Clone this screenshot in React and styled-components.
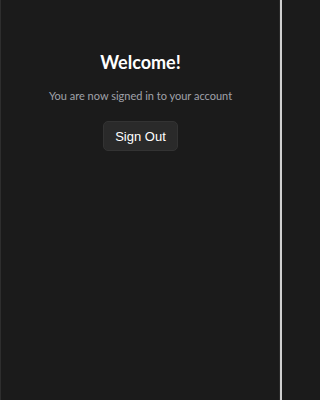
import React from 'react';
import styled, { createGlobalStyle } from 'styled-components';

const GlobalStyle = createGlobalStyle`
	html, body {
		margin: 0;
		padding: 0;
		background: #1b1b1b;
	}
`;

const Page = styled.div`
	width: 282px;
	height: 400px;
	box-sizing: border-box;
	background: #1b1b1b;
	border-left: 1px solid #2e2e2e;
	border-right: 2px solid #cfcfcf;
	box-shadow: inset -1px 0 0 #2a2a2a;
	display: flex;
	flex-flow: column nowrap;
	align-items: center;
	padding-top: 50px;
`;

const Heading = styled.h1`
	margin: 0;
	color: #ffffff;
	font-family: Lato, 'Open Sans', sans-serif;
	font-size: 18px;
	font-weight: 700;
	line-height: 24px;
`;

const Subtitle = styled.p`
	margin: 14px 0 0;
	color: #a0a2aa;
	font-family: Lato, 'Open Sans', sans-serif;
	font-size: 11px;
	line-height: 16px;
`;

const SignOutButton = styled.button`
	margin-top: 17px;
	width: 75px;
	height: 30px;
	background: #2a2a2a;
	color: #ffffff;
	border: 1px solid #333333;
	border-radius: 5px;
	font-family: 'Liberation Sans', Arial, sans-serif;
	font-size: 13px;
	cursor: pointer;
`;

const App = () => (
	<>
		<GlobalStyle />
		<Page>
			<Heading>Welcome!</Heading>
			<Subtitle>You are now signed in to your account</Subtitle>
			<SignOutButton>Sign Out</SignOutButton>
		</Page>
	</>
);

export default App;
